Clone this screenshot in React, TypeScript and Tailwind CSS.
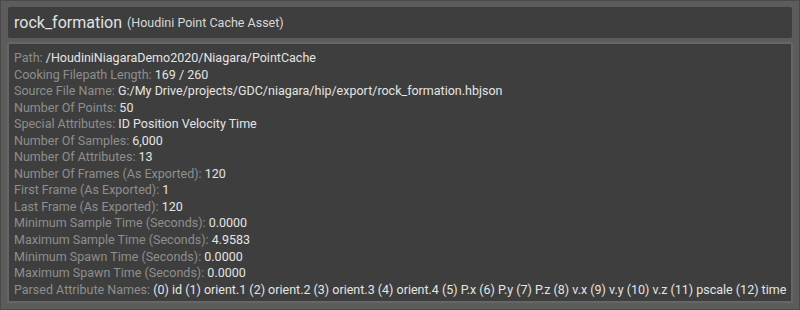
import React from 'react';

const rows: [string, string][] = [
  ['Path', '/HoudiniNiagaraDemo2020/Niagara/PointCache'],
  ['Cooking Filepath Length', '169 / 260'],
  ['Source File Name', 'G:/My Drive/projects/GDC/niagara/hip/export/rock_formation.hbjson'],
  ['Number Of Points', '50'],
  ['Special Attributes', 'ID Position Velocity Time'],
  ['Number Of Samples', '6,000'],
  ['Number Of Attributes', '13'],
  ['Number Of Frames (As Exported)', '120'],
  ['First Frame (As Exported)', '1'],
  ['Last Frame (As Exported)', '120'],
  ['Minimum Sample Time (Seconds)', '0.0000'],
  ['Maximum Sample Time (Seconds)', '4.9583'],
  ['Minimum Spawn Time (Seconds)', '0.0000'],
  ['Maximum Spawn Time (Seconds)', '0.0000'],
  [
    'Parsed Attribute Names',
    '(0) id (1) orient.1 (2) orient.2 (3) orient.3 (4) orient.4 (5) P.x (6) P.y (7) P.z (8) v.x (9) v.y (10) v.z (11) pscale (12) time',
  ],
];

const App: React.FC = () => {
  return (
    <div
      className="w-[800px] h-[310px] bg-[#5c5c5c] border border-[#4a4a4a] px-[6px] pt-[6px] pb-[6px] flex flex-col gap-[4px] overflow-hidden"
      style={{ fontFamily: 'Roboto, "Noto Sans", sans-serif' }}
    >
      <div className="h-[31px] shrink-0 bg-[#3e3e3e] rounded-[2px] flex items-center px-[6px] mx-px pt-[1px]">
        <span className="text-[16px] text-[#e2e2e2] leading-none">rock_formation</span>
        <span className="text-[12.5px] text-[#d8d8d8] ml-[5px] leading-none">(Houdini Point Cache Asset)</span>
      </div>
      <div className="flex-1 bg-[#3e3e3e] rounded-[2px] border-[2px] border-[#666666] px-[5px] pt-[6px]">
        {rows.map(([label, value]) => (
          <div key={label} className="text-[12.5px] leading-[16.55px] whitespace-nowrap">
            <span className="text-[#8e8e8e]">{label}: </span>
            <span className="text-[#e4e4e4]">{value}</span>
          </div>
        ))}
      </div>
    </div>
  );
};

export default App;
